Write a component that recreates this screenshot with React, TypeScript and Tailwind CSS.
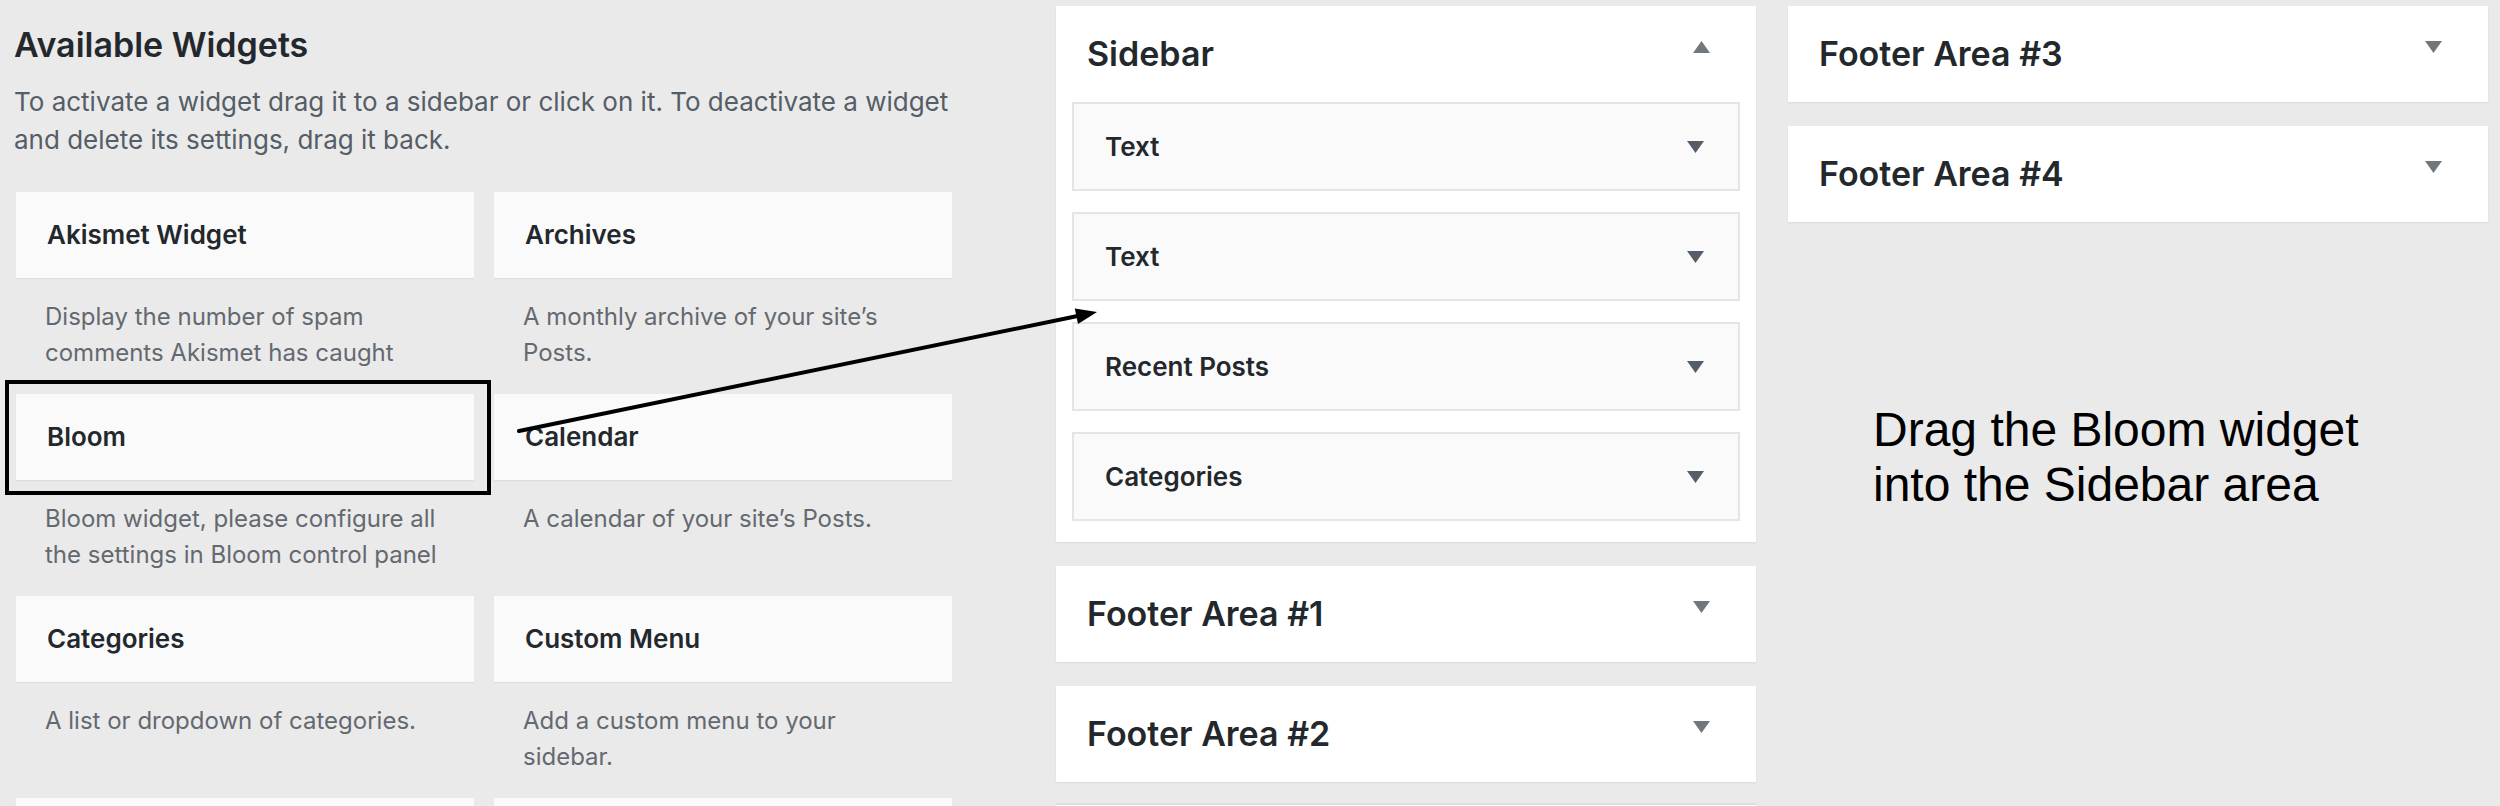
const widgets = [
  { name: "Akismet Widget", desc: ["Display the number of spam", "comments Akismet has caught"] },
  { name: "Archives", desc: ["A monthly archive of your site’s", "Posts."] },
  { name: "Bloom", desc: ["Bloom widget, please configure all", "the settings in Bloom control panel"] },
  { name: "Calendar", desc: ["A calendar of your site’s Posts."] },
  { name: "Categories", desc: ["A list or dropdown of categories."] },
  { name: "Custom Menu", desc: ["Add a custom menu to your", "sidebar."] },
  // last row only peeks in at the bottom edge
  { name: "", desc: [] },
  { name: "", desc: [] },
];

const sidebarWidgets = ["Text", "Text", "Recent Posts", "Categories"];

function Triangle({ up = false, color = "#72777c" }: { up?: boolean; color?: string }) {
  return (
    <svg width="17" height="12" viewBox="0 0 17 12" className="shrink-0">
      {up ? (
        <polygon points="8.5,0 17,12 0,12" fill={color} />
      ) : (
        <polygon points="0,0 17,0 8.5,12" fill={color} />
      )}
    </svg>
  );
}

function AreaHeader({ title, up = false }: { title: string; up?: boolean }) {
  return (
    <div className="flex h-[96px] items-center justify-between pl-[31px] pr-[46px]">
      <h2 className="text-[34px] font-semibold leading-[40px] text-[#23282d]">{title}</h2>
      <div className="mb-[14px]">
        <Triangle up={up} />
      </div>
    </div>
  );
}

function AreaPanel({ title }: { title: string }) {
  return (
    <div className="bg-white shadow-[0_1px_2px_rgba(0,0,0,0.07)]">
      <AreaHeader title={title} />
    </div>
  );
}

export default function App() {
  return (
    <div className="relative flex h-[806px] w-[2500px] overflow-hidden bg-[#eaeaea] font-['Inter',sans-serif] text-[#23282d]">
      {/* available widgets */}
      <div className="w-[952px] shrink-0 pl-[16px] pt-[25px]">
        <h2 className="-ml-[2px] text-[34px] font-semibold leading-[40px]">Available Widgets</h2>
        <p className="-ml-[2px] mt-[18px] text-[26px] leading-[38px] text-[#555d66]">
          To activate a widget drag it to a sidebar or click on it. To deactivate a widget
          <br />
          and delete its settings, drag it back.
        </p>
        <div className="mt-[33px] grid grid-cols-[458px_458px] gap-x-[20px]">
          {widgets.map((w, i) => (
            <div key={i} className="h-[202px]">
              <div className="flex h-[86px] items-center bg-[#fafafa] pl-[31px] shadow-[0_1px_1px_rgba(0,0,0,0.05)]">
                {w.name && <span className="text-[26px] font-semibold leading-[32px]">{w.name}</span>}
              </div>
              <div className="pl-[29px] pt-[21px] text-[24px] leading-[36px] text-[#646970]">
                {w.desc.map((line, j) => (
                  <div key={j}>{line}</div>
                ))}
              </div>
            </div>
          ))}
        </div>
      </div>

      {/* sidebar + footer areas */}
      <div className="ml-[104px] flex w-[700px] shrink-0 flex-col gap-[24px] pt-[6px]">
        <div className="bg-white shadow-[0_1px_2px_rgba(0,0,0,0.07)]">
          <AreaHeader title="Sidebar" up />
          <div className="flex flex-col gap-[21px] px-[16px] pb-[21px]">
            {sidebarWidgets.map((name, i) => (
              <div
                key={i}
                className="flex h-[89px] items-center justify-between border-2 border-[#e5e5e5] bg-[#fafafa] pl-[31px] pr-[34px]"
              >
                <span className="text-[26px] font-semibold leading-[32px]">{name}</span>
                <Triangle color="#555d66" />
              </div>
            ))}
          </div>
        </div>
        <AreaPanel title="Footer Area #1" />
        <AreaPanel title="Footer Area #2" />
        <div className="-mt-[3px] h-[96px] border-t-2 border-[#dddddd] bg-white" />
      </div>

      {/* more footer areas + note */}
      <div className="ml-[32px] flex w-[700px] shrink-0 flex-col pt-[6px]">
        <div className="flex flex-col gap-[24px]">
          <AreaPanel title="Footer Area #3" />
          <AreaPanel title="Footer Area #4" />
        </div>
        <p className="mt-[180px] pl-[85px] font-['Liberation_Sans',Arial,sans-serif] text-[48px] leading-[55px] text-black">
          Drag the Bloom widget
          <br />
          into the Sidebar area
        </p>
      </div>

      {/* annotation overlay */}
      <div className="pointer-events-none absolute left-[5px] top-[380px] h-[115px] w-[486px] border-4 border-black" />
      <svg
        className="pointer-events-none absolute left-0 top-0"
        width="2500"
        height="806"
        viewBox="0 0 2500 806"
      >
        <line x1="519" y1="431" x2="1080" y2="315.5" stroke="#000" strokeWidth="4" strokeLinecap="round" />
        <polygon points="1097,312 1078,324 1074.8,308.4" fill="#000" />
      </svg>
    </div>
  );
}
